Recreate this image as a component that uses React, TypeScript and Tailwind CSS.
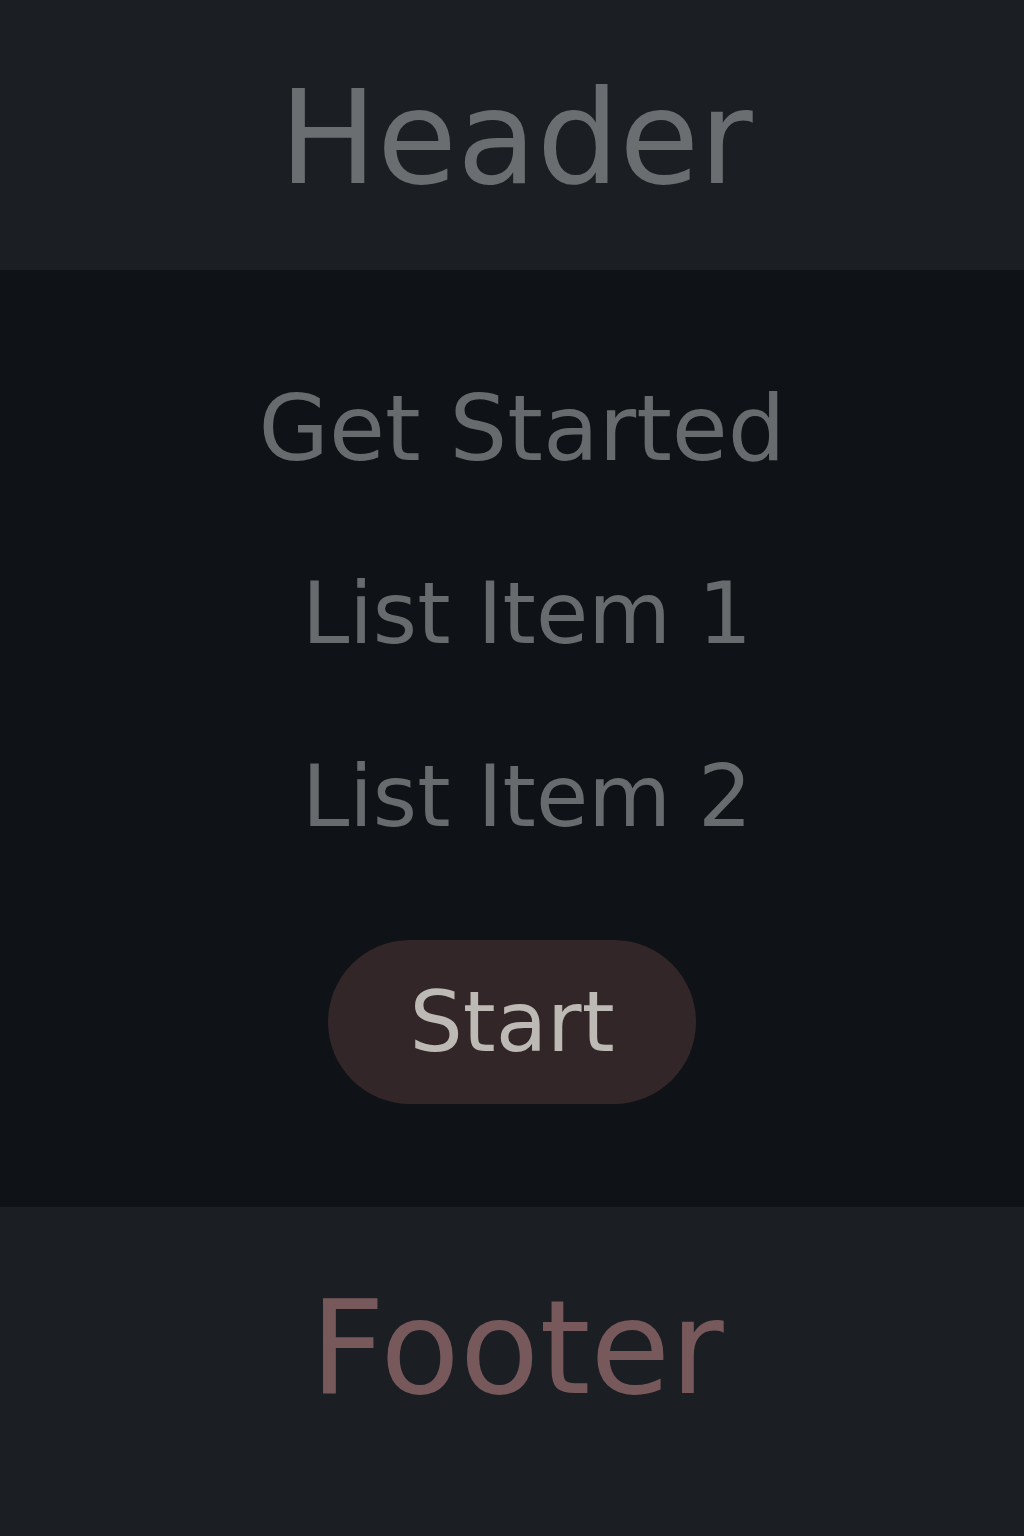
const App = () => {
  return (
    <div
      className="flex flex-col w-full min-h-[1536px] bg-[#0f1216]"
      style={{ fontFamily: '"DejaVu Sans", "Liberation Sans", sans-serif' }}
    >
      <header className="flex h-[270px] items-center justify-center pt-[6px] pl-[8px] bg-[#1b1e22]">
        <h1 className="text-[130px] leading-none font-normal text-[#6b6e71]">Header</h1>
      </header>

      <main className="flex h-[937px] flex-col items-center bg-[#0f1216] pt-[113px]">
        <h2 className="ml-[20px] text-[91px] leading-none text-[#676b6e]">Get Started</h2>
        <ul className="ml-[30px] flex flex-col items-center">
          <li className="mt-[97px] text-[85px] leading-none text-[#676b6e]">List Item 1</li>
          <li className="mt-[98px] text-[85px] leading-none text-[#676b6e]">List Item 2</li>
        </ul>
        <button className="mt-[101px] flex h-[164px] w-[368px] items-center justify-center rounded-full bg-[#322628] text-[84px] leading-none text-[#bdb9b4]">
          Start
        </button>
      </main>

      <footer className="flex h-[329px] justify-center bg-[#1b1e22] pt-[76px] pl-[10px]">
        <p className="text-[130px] leading-none text-[#77595b]">Footer</p>
      </footer>
    </div>
  );
};

export default App;
